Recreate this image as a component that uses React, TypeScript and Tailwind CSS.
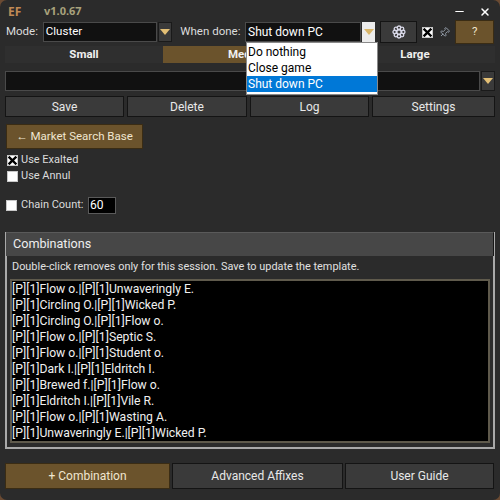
import { X, Minus, Pin } from "lucide-react";

const combos = [
  "[P][1]Flow o.|[P][1]Unwaveringly E.",
  "[P][1]Circling O.|[P][1]Wicked P.",
  "[P][1]Circling O.|[P][1]Flow o.",
  "[P][1]Flow o.|[P][1]Septic S.",
  "[P][1]Flow o.|[P][1]Student o.",
  "[P][1]Dark I.|[P][1]Eldritch I.",
  "[P][1]Brewed f.|[P][1]Flow o.",
  "[P][1]Eldritch I.|[P][1]Vile R.",
  "[P][1]Flow o.|[P][1]Wasting A.",
  "[P][1]Unwaveringly E.|[P][1]Wicked P.",
];

function Arrow() {
  return (
    <div className="w-[14px] h-full bg-[#3a3a3a] border border-[#1a1a1a] flex items-center justify-center shrink-0">
      <div className="w-0 h-0 border-x-[5px] border-x-transparent border-t-[6px] border-t-[#e3bf75]" />
    </div>
  );
}

function Check({ on }: { on?: boolean }) {
  return (
    <div className="w-[11px] h-[11px] bg-white border border-[#c8c8c8] flex items-center justify-center shrink-0">
      {on && (
        <svg width="9" height="9" viewBox="0 0 9 9" stroke="black" strokeWidth="2.4" strokeLinecap="square">
          <path d="M1.5 1.5 L7.5 7.5 M7.5 1.5 L1.5 7.5" />
        </svg>
      )}
    </div>
  );
}

function Btn({ label, className }: { label: string; className: string }) {
  return (
    <button className={`flex items-center justify-center bg-[#3a3a3a] border border-[#141414] text-[#e8e8e8] ${className}`}>
      {label}
    </button>
  );
}

function GoldBtn({ label, className }: { label: string; className: string }) {
  return (
    <button className={`flex items-center justify-center bg-[#6b532c] border border-[#3a2c14] text-[#f0e6d0] ${className}`}>
      {label}
    </button>
  );
}

export default function App() {
  return (
    <div className="w-[500px] h-[500px] bg-[#6a4a32] overflow-hidden">
      <div className="relative w-[500px] h-[500px] rounded-[7px] bg-[#2b2b2b] text-[12px] text-[#dcdcdc] overflow-hidden font-['Roboto',sans-serif]">
        <div className="h-[21px] flex items-center pl-[8px] pr-[9px] pt-[2px] font-['Noto_Sans',sans-serif]">
          <span className="w-[36px] font-bold text-[#c08a55]">EF</span>
          <span className="font-bold text-[11px] text-[#a8a27c]">v1.0.67</span>
          <Minus size={13} className="ml-auto text-white" />
          <X size={12} strokeWidth={3} className="ml-[13px] text-white" />
        </div>

        <div className="h-[22px] flex items-center pl-[6px] pr-[6px] whitespace-nowrap text-[11.5px]">
          <span className="w-[37px]">Mode:</span>
          <div className="w-[115px] h-[20px] bg-[#111111] border border-[#4a4a4a] px-[2px] flex items-center text-white">Cluster</div>
          <div className="h-[20px] ml-[1px]"><Arrow /></div>
          <span className="ml-[8px] w-[65px]">When done:</span>
          <div className="w-[117px] h-[20px] bg-[#111111] border border-[#4a4a4a] px-[2px] flex items-center text-[12px] text-white">Shut down PC</div>
          <div className="h-[20px] ml-[1px] bg-[#ececec] w-[13px] flex items-center justify-center">
            <div className="w-0 h-0 border-x-[5px] border-x-transparent border-t-[6px] border-t-[#d9b66a]" />
          </div>
          <button className="ml-[5px] w-[37px] h-[22px] bg-[#3a3a3a] border border-[#141414] flex items-center justify-center">
            <svg width="14" height="14" viewBox="0 0 14 14" fill="none" stroke="#d8d8e8" strokeWidth="1.3">
              <circle cx="7" cy="7" r="2.2" />
              <circle cx="7" cy="2.8" r="1.8" />
              <circle cx="7" cy="11.2" r="1.8" />
              <circle cx="2.8" cy="7" r="1.8" />
              <circle cx="11.2" cy="7" r="1.8" />
              <circle cx="4" cy="4" r="1.8" />
              <circle cx="10" cy="4" r="1.8" />
              <circle cx="4" cy="10" r="1.8" />
              <circle cx="10" cy="10" r="1.8" />
            </svg>
          </button>
          <div className="ml-[5px]"><Check on /></div>
          <Pin size={11} className="ml-[6px] rotate-45 text-[#9aa4b0]" />
          <GoldBtn label="?" className="ml-[5px] w-[39px] h-[24px]" />
        </div>

        <div className="mt-[3px] mx-[5px] h-[17px] grid grid-cols-[158px_172px_160px] bg-[#2f2f2f] font-bold text-[11.5px] text-[#f0f0f0]">
          <div className="flex items-center justify-center">Small</div>
          <div className="flex items-center justify-center bg-[#6b532c]">Medium</div>
          <div className="flex items-center justify-center">Large</div>
        </div>

        <div className="mt-[8px] mx-[5px] h-[20px] flex gap-[1px]">
          <div className="flex-1 bg-[#111111] border border-[#4a4a4a]" />
          <Arrow />
        </div>

        <div className="mt-[5px] mx-[5px] h-[21px] grid grid-cols-[119px_120px_119px_123px] gap-[3px]">
          <Btn label="Save" className="" />
          <Btn label="Delete" className="" />
          <Btn label="Log" className="" />
          <Btn label="Settings" className="" />
        </div>

        <GoldBtn label="← Market Search Base" className="mt-[7px] ml-[6px] w-[137px] h-[25px] text-[11.5px]" />

        <div className="mt-[3px] ml-[7px] h-[16px] flex items-center gap-[3px] text-[11px]">
          <Check on />
          <span>Use Exalted</span>
        </div>
        <div className="ml-[7px] h-[16px] flex items-center gap-[3px] text-[11px]">
          <Check />
          <span>Use Annul</span>
        </div>

        <div className="mt-[12px] ml-[6px] h-[18px] flex items-center whitespace-nowrap text-[11px]">
          <Check />
          <span className="ml-[4px] w-[67px]">Chain Count:</span>
          <div className="w-[28px] h-[17px] bg-black border border-[#5a5a5a] px-[1px] flex items-center text-[12px] text-white">60</div>
        </div>

        <div className="mt-[18px] mx-[5px] h-[217px] border-b-2 border-x-2 border-[#a9a9a9] flex flex-col">
          <div className="h-[24px] -mx-[1px] bg-[#474747] border-t border-t-[#5a5a5a] border-r border-r-[#161616] flex items-center px-[7px] text-[12.6px] text-[#eeeeee] shrink-0">Combinations</div>
          <div className="h-[23px] px-[5px] flex items-center text-[10.9px] text-[#e0e0e0] shrink-0 whitespace-nowrap">Double-click removes only for this session. Save to update the template.</div>
          <div className="flex-1 mx-[3px] mb-[4px] bg-black border-2 border-[#5f5a4c] text-[12.2px] text-[#f0f0f0]">
            {combos.map((c) => (
              <div key={c} className="h-[16px] leading-[16px]">{c}</div>
            ))}
          </div>
        </div>

        <div className="mt-[14px] mx-[5px] h-[26px] grid grid-cols-[165px_171px_149px] gap-[2px]">
          <GoldBtn label="+ Combination" className="" />
          <Btn label="Advanced Affixes" className="" />
          <Btn label="User Guide" className="" />
        </div>

        <div className="absolute left-[246px] top-[42px] w-[132px] h-[53px] py-[1px] bg-white border border-[#8a8a8a] text-black">
          <div className="h-[16px] leading-[16px] pl-[1px]">Do nothing</div>
          <div className="h-[16px] leading-[16px] pl-[1px]">Close game</div>
          <div className="h-[16px] leading-[16px] pl-[1px] bg-[#0078d7] text-white">Shut down PC</div>
        </div>
      </div>
    </div>
  );
}
